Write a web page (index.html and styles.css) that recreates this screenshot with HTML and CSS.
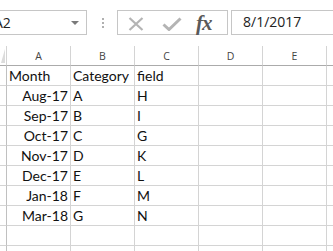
FILE: index.html
```html
<!DOCTYPE html>
<html>
<head>
<meta charset="utf-8">
<link rel="stylesheet" href="styles.css">
</head>
<body>
<div class="app">
  <div class="toolbar">
    <div class="namebox">
      <span class="nb-text">A2</span>
      <span class="nb-arrow"></span>
    </div>
    <div class="grip"><i></i><i></i><i></i></div>
    <div class="fxbox">
      <svg class="ico-x" width="16" height="14" viewBox="0 0 16 14"><path d="M1.5 1 L14.5 13 M14.5 1 L1.5 13" stroke="#b4b4b4" stroke-width="2.2" fill="none"/></svg>
      <svg class="ico-check" width="20" height="14" viewBox="0 0 20 14"><path d="M1.5 7.5 L7 12.5 L18.5 1.5" stroke="#b4b4b4" stroke-width="3" fill="none" stroke-linejoin="miter"/></svg>
      <span class="fx">fx</span>
    </div>
    <div class="formula">8/1/2017</div>
  </div>
  <div class="sheet">
    <div class="corner"><span class="tri"></span></div>
    <div class="ch">A</div><div class="ch">B</div><div class="ch">C</div><div class="ch">D</div><div class="ch">E</div><div class="ch"></div>

    <div class="rh"></div><div class="c">Month</div><div class="c">Category</div><div class="c">field</div><div class="c"></div><div class="c"></div><div class="c"></div>
    <div class="rh"></div><div class="c r">Aug-17</div><div class="c">A</div><div class="c">H</div><div class="c"></div><div class="c"></div><div class="c"></div>
    <div class="rh"></div><div class="c r">Sep-17</div><div class="c">B</div><div class="c">I</div><div class="c"></div><div class="c"></div><div class="c"></div>
    <div class="rh"></div><div class="c r">Oct-17</div><div class="c">C</div><div class="c">G</div><div class="c"></div><div class="c"></div><div class="c"></div>
    <div class="rh"></div><div class="c r">Nov-17</div><div class="c">D</div><div class="c">K</div><div class="c"></div><div class="c"></div><div class="c"></div>
    <div class="rh"></div><div class="c r">Dec-17</div><div class="c">E</div><div class="c">L</div><div class="c"></div><div class="c"></div><div class="c"></div>
    <div class="rh"></div><div class="c r">Jan-18</div><div class="c">F</div><div class="c">M</div><div class="c"></div><div class="c"></div><div class="c"></div>
    <div class="rh"></div><div class="c r">Mar-18</div><div class="c">G</div><div class="c">N</div><div class="c"></div><div class="c"></div><div class="c"></div>
    <div class="rh"></div><div class="c"></div><div class="c"></div><div class="c"></div><div class="c"></div><div class="c"></div><div class="c"></div>
    <div class="rh"></div><div class="c"></div><div class="c"></div><div class="c"></div><div class="c"></div><div class="c"></div><div class="c"></div>
  </div>
</div>
</body>
</html>
```

FILE: styles.css
```css
html, body {
  margin: 0;
  padding: 0;
  background: #fff;
}
.app {
  width: 333px;
  height: 251px;
  overflow: hidden;
  font-family: Lato, "Liberation Sans", sans-serif;
}
.toolbar {
  height: 46px;
  box-sizing: border-box;
  padding-top: 10px;
  display: flex;
  align-items: flex-start;
}
.namebox {
  margin-left: -20px;
  width: 107px;
  height: 25px;
  box-sizing: border-box;
  border: 1px solid #c6c6c6;
  display: flex;
  align-items: center;
  justify-content: space-between;
  padding: 0 7px 0 13px;
  flex-shrink: 0;
}
.nb-text {
  font-family: "Open Sans", sans-serif;
  font-size: 14px;
  color: #222;
}
.nb-arrow {
  width: 0;
  height: 0;
  border-left: 4px solid transparent;
  border-right: 4px solid transparent;
  border-top: 4px solid #7a7a7a;
  margin-top: 1px;
}
.grip {
  margin-left: 15px;
  width: 3px;
  height: 25px;
  display: flex;
  flex-direction: column;
  justify-content: center;
  gap: 2px;
  flex-shrink: 0;
}
.grip i {
  display: block;
  width: 2px;
  height: 2px;
  background: #b0b0b0;
}
.fxbox {
  margin-left: 12px;
  width: 111px;
  height: 25px;
  box-sizing: border-box;
  border: 1px solid #c6c6c6;
  display: flex;
  align-items: center;
  flex-shrink: 0;
}
.ico-x {
  margin-left: 10px;
  margin-top: 2px;
}
.ico-check {
  margin-left: 18px;
  margin-top: 2px;
}
.fx {
  margin-left: 14px;
  font-family: "Liberation Serif", serif;
  font-style: italic;
  font-weight: bold;
  font-size: 21px;
  color: #5a5a5a;
  letter-spacing: -1px;
  line-height: 20px;
}
.formula {
  margin-left: 3px;
  flex: 1 0 auto;
  margin-right: -20px;
  height: 25px;
  box-sizing: border-box;
  border: 1px solid #c6c6c6;
  padding-left: 11px;
  font-family: "Open Sans", sans-serif;
  font-size: 14px;
  line-height: 22px;
  color: #222;
}
.sheet {
  display: grid;
  grid-template-columns: 7px repeat(6, 64px);
  grid-auto-rows: 20px;
}
.sheet > div {
  box-sizing: border-box;
  border-right: 1px solid #d4d4d4;
  border-bottom: 1px solid #d4d4d4;
  white-space: nowrap;
  overflow: hidden;
}
.sheet > .corner {
  position: relative;
  border-right: 1px solid #d4d4d4;
  border-bottom: 1px solid #ababab;
}
.tri {
  position: absolute;
  right: 1px;
  bottom: 2px;
  width: 0;
  height: 0;
  border-left: 4px solid transparent;
  border-bottom: 14px solid #dcdcdc;
}
.sheet > .ch {
  border-bottom: 1px solid #ababab;
  text-align: center;
  font-family: "Open Sans", sans-serif;
  font-size: 10.5px;
  line-height: 20px;
  color: #444;
}
.sheet > .rh {
  border-right: 1px solid #c0c0c0;
}
.sheet > .c {
  font-size: 14px;
  line-height: 20px;
  color: #111;
  padding: 0 2px 0 2px;
}
.sheet > .c.r {
  text-align: right;
}
```
